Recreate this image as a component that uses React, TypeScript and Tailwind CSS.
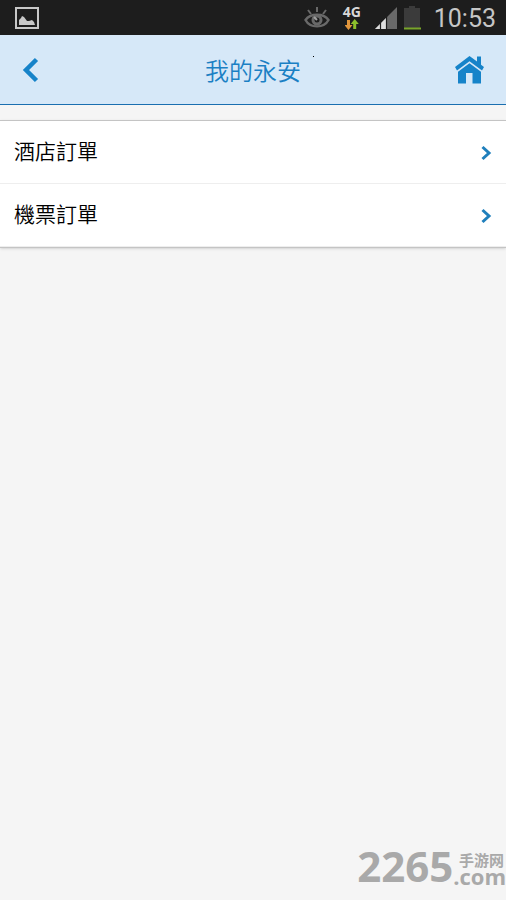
type Order = {
  id: string;
  label: string;
};

const orders: Order[] = [
  { id: "hotel", label: "酒店訂單" },
  { id: "flight", label: "機票訂單" },
];

function StatusBar() {
  return (
    <div className="h-[35px] bg-[#1d1d1d] flex items-center justify-between pl-[14px] pr-[10px]">
      <svg width="26" height="24" viewBox="0 0 26 24">
        <rect x="2" y="2" width="22" height="20" fill="none" stroke="#c8c8c8" strokeWidth="2" />
        <path d="M5 19v-5l2-2 1-2 2 1 3 4 2 0 3-1 2 2 1 3z" fill="#c8c8c8" />
      </svg>

      <div className="flex items-center">
        <svg width="26" height="24" viewBox="0 0 26 24" fill="none" stroke="#696969">
          <path d="M1.500 14C6 7 20 7 24.500 14C20 22.500 6 22.500 1.500 14Z" strokeWidth="2.400" />
          <circle cx="13" cy="14" r="5.500" fill="#696969" stroke="none" />
          <circle cx="13" cy="14" r="2.500" fill="#1d1d1d" stroke="none" />
          <path d="M10 11l3 3" stroke="#a0a0a0" strokeWidth="2" />
          <path d="M13 1v5M4 4l3 4M22 4l-3 4" strokeWidth="2" />
        </svg>

        <div className="w-5 ml-3 flex flex-col items-center">
          <span className="font-['Open_Sans',sans-serif] font-bold text-sm leading-[14px] text-[#d8d8d8]">
            4G
          </span>
          <svg width="14" height="11" viewBox="0 0 14 11">
            <path d="M2 1h3v5h2.500L3.500 11-.5 6H2z" fill="#e2963c" />
            <path d="M8.200 10h3V5H13.800L9.700 0 5.700 5h2.500z" fill="#8cc02c" />
          </svg>
        </div>

        <svg className="ml-3" width="24" height="24" viewBox="0 0 24 24">
          <path d="M1 23L23 1v22z" fill="#696969" />
          <path d="M1 23L12 12v11z" fill="#dedede" />
          <path d="M6.500 15v8M12.500 9v14" stroke="#1d1d1d" strokeWidth="1.200" />
        </svg>

        <svg className="ml-1" width="20" height="26" viewBox="0 0 20 26">
          <path d="M2 3h5V1h6v2h5v20H2z" fill="#3b3b3b" />
          <path d="M2 23.500h17" stroke="#79a52a" strokeWidth="2" />
        </svg>

        <span className="ml-3 pt-0.5 font-['Roboto',sans-serif] text-[25px] leading-8 text-[#c6c6c6]">
          10:53
        </span>
      </div>
    </div>
  );
}

function Header() {
  return (
    <header className="relative h-[70px] bg-[#d6e8f8] border-b border-[#1a6fb0] flex items-center justify-between px-5">
      <button aria-label="返回" className="w-8 h-10 flex items-center">
        <svg width="20" height="26" viewBox="0 0 20 26">
          <path d="M16.500 2.500L6 13l10.500 10.500" fill="none" stroke="#1683c9" strokeWidth="4.500" />
        </svg>
      </button>

      <h1 className="text-2xl leading-8 font-[350] text-[#1a80c4]">我的永安</h1>
      <span className="absolute left-[313px] top-[21px] size-px bg-black" />

      <a href="#home" aria-label="首頁" className="w-8 h-10 flex items-center">
        <svg width="32" height="30" viewBox="0 0 32 30" fill="#1683c9">
          <path d="M15.500 1L1 12l2 3.500L15.500 6.300 28 15.500 30 12l-3-2.300V1.500h-4V6.500z" />
          <path d="M15.500 8.200L4 16.800V28.500h8V18h6.500v10.500h8.500V16.800z" />
        </svg>
      </a>
    </header>
  );
}

function App() {
  return (
    <div className="relative min-h-screen bg-[#f5f5f5] font-['Noto_Sans_CJK_TC',sans-serif]">
      <StatusBar />
      <Header />

      {/* ORDER LIST */}
      <main className="mt-[15px] bg-white border-y border-[#c4c4c4] shadow">
        {orders.map((order) => (
          <a
            key={order.id}
            href={`#${order.id}`}
            className="h-[63px] px-[14px] flex items-center justify-between border-b border-[#eeeeee]"
          >
            <span className="pb-1 text-[21px] leading-8 font-[350] text-black">{order.label}</span>
            <svg width="12" height="18" viewBox="0 0 12 18">
              <path d="M2.500 4L9 10l-6.500 6" fill="none" stroke="#1f7fbc" strokeWidth="3" />
            </svg>
          </a>
        ))}
      </main>

      {/* SITE MARK */}
      <div className="absolute right-0 bottom-3 flex items-end text-[#a9a9a9] font-['Open_Sans',sans-serif] font-bold">
        <span className="text-[42px] leading-[44px]">2265</span>
        <span className="pb-1 flex flex-col items-end">
          <span className="pr-0.5 text-[15px] leading-4 font-['Noto_Sans_CJK_SC',sans-serif]">
            手游网
          </span>
          <span className="text-[22px] leading-4">.com</span>
        </span>
      </div>
    </div>
  );
}

export default App;
